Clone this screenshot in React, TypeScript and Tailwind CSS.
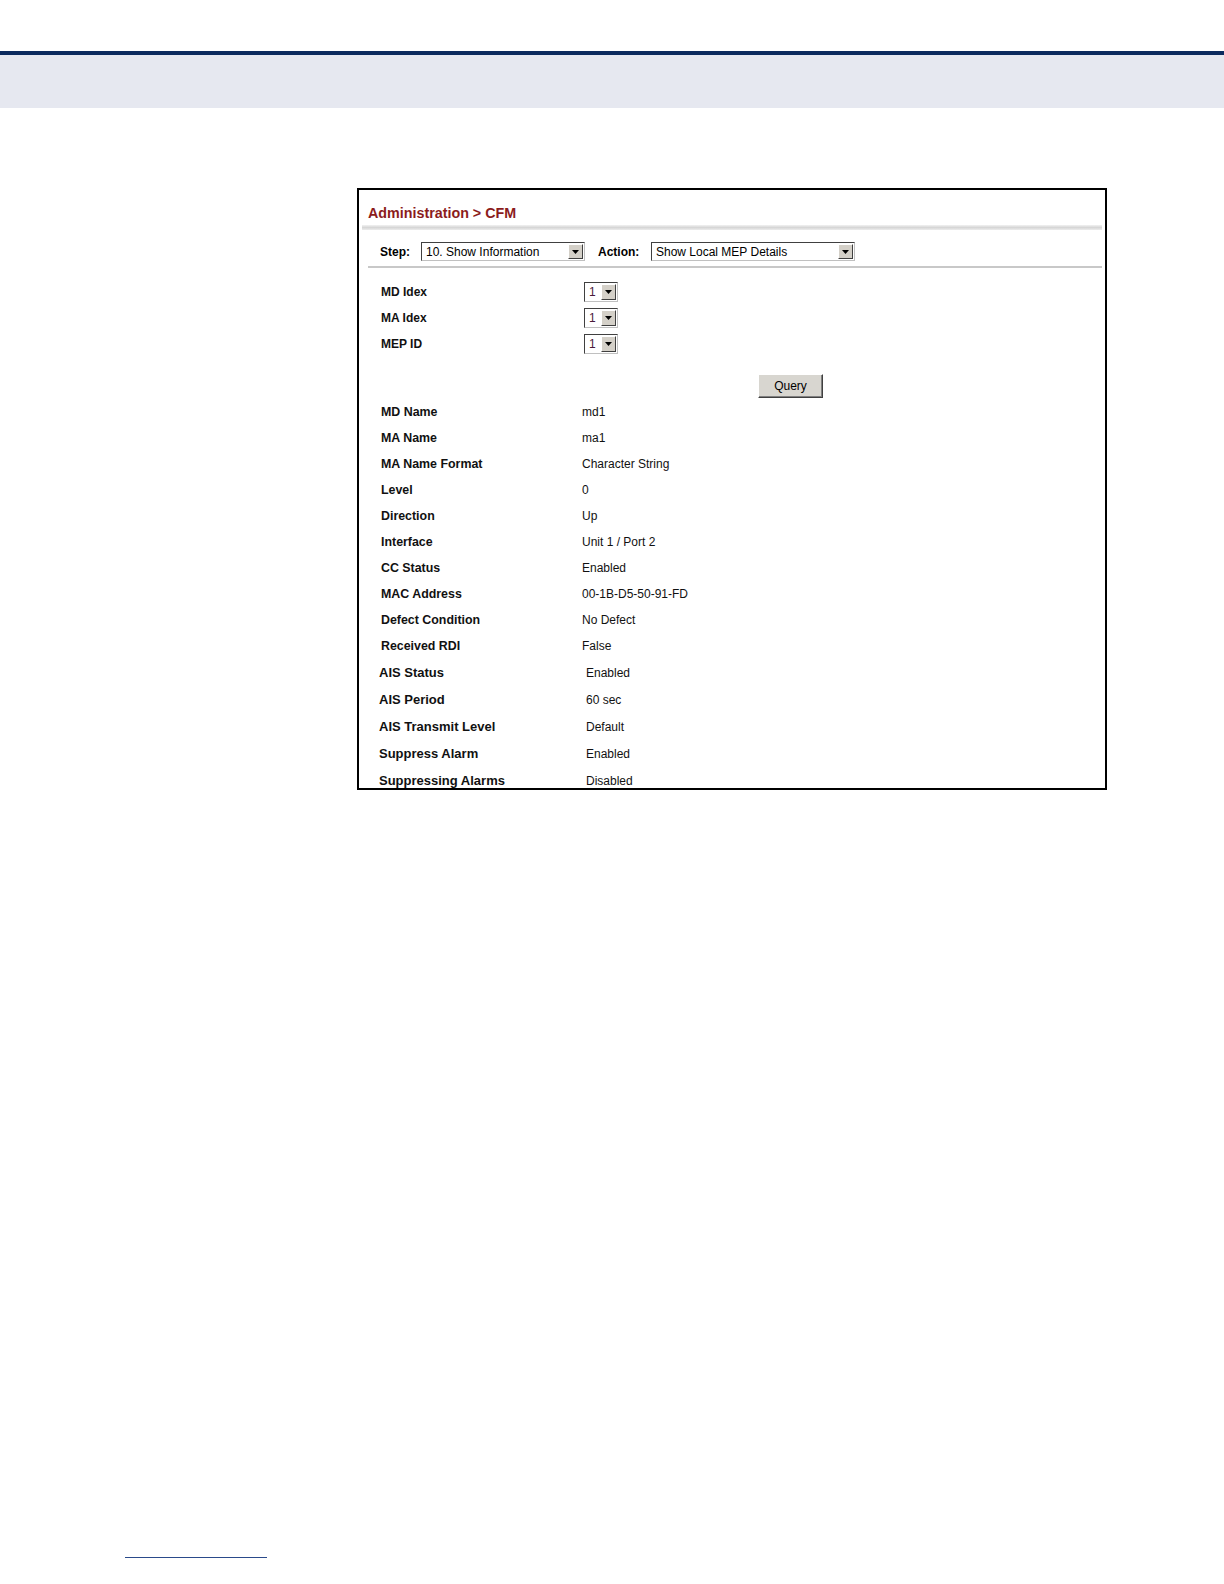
import React from "react";

const Arrow = () => (
  <div className="flex h-full w-[15px] items-center justify-center border border-t-white border-l-white border-b-[#404040] border-r-[#404040] bg-[#d4d0c8]">
    <svg width="7" height="4" viewBox="0 0 7 4">
      <path d="M0 0 H7 L3.5 4 Z" fill="#000" />
    </svg>
  </div>
);

const Select = ({ value, width }: { value: string; width: string }) => (
  <div
    className={`flex h-[19px] items-stretch border border-t-[#404040] border-l-[#404040] border-b-[#c0c0c0] border-r-[#c0c0c0] bg-white p-[1px] ${width}`}
  >
    <div className="flex flex-1 items-center pl-[3px] text-[12px] leading-none text-black">
      {value}
    </div>
    <Arrow />
  </div>
);

const SmallSelect = () => (
  <div className="flex h-[20px] w-[34px] items-stretch border border-t-[#404040] border-l-[#404040] border-b-[#c0c0c0] border-r-[#c0c0c0] bg-white p-[1px]">
    <div className="flex flex-1 items-center pl-[3px] text-[12px] leading-none text-[#4a1a3a]">
      1
    </div>
    <Arrow />
  </div>
);

const indexRows = ["MD Idex", "MA Idex", "MEP ID"];

const infoRows: [string, string][] = [
  ["MD Name", "md1"],
  ["MA Name", "ma1"],
  ["MA Name Format", "Character String"],
  ["Level", "0"],
  ["Direction", "Up"],
  ["Interface", "Unit 1 / Port 2"],
  ["CC Status", "Enabled"],
  ["MAC Address", "00-1B-D5-50-91-FD"],
  ["Defect Condition", "No Defect"],
  ["Received RDI", "False"],
];

const aisRows: [string, string][] = [
  ["AIS Status", "Enabled"],
  ["AIS Period", "60 sec"],
  ["AIS Transmit Level", "Default"],
  ["Suppress Alarm", "Enabled"],
  ["Suppressing Alarms", "Disabled"],
];

export default function App() {
  return (
    <div className="relative min-h-[1584px] w-[1224px] bg-white font-['Liberation_Sans',Arial,sans-serif]">
      {/* page header band */}
      <div className="h-[51px]" />
      <div className="h-[4px] bg-[#0b2a5e]" />
      <div className="h-[53px] bg-[#e6e8f0]" />

      <div className="pl-[357px] pt-[80px]">
        <div className="h-[602px] w-[750px] overflow-hidden border-2 border-black bg-white">
          {/* title */}
          <div className="mt-[15px] pl-[9px] text-[14.3px] font-bold leading-[16px] text-[#8b1c1c]">
            Administration &gt; CFM
          </div>
          <div className="mx-[3px] mt-[4px] h-[5px] bg-gradient-to-b from-[#f2f2f2] via-[#d6d6d6] to-[#ececec]" />

          {/* step / action */}
          <div className="mt-[12px] flex h-[19px] items-center pl-[21px] text-[12px] text-black">
            <span className="w-[41px] font-bold">Step:</span>
            <Select value="10. Show Information" width="w-[164px]" />
            <span className="ml-[13px] w-[53px] font-bold">Action:</span>
            <Select value="Show Local MEP Details" width="w-[204px]" />
          </div>
          <div className="ml-[9px] mr-[3px] mt-[5px] h-[2px] bg-[#c8c8c8]" />

          {/* index selects */}
          <div className="mt-[11px] pl-[22px]">
            {indexRows.map((label) => (
              <div key={label} className="flex h-[26px] items-center">
                <span className="w-[203px] text-[12px] font-bold text-[#111]">
                  {label}
                </span>
                <SmallSelect />
              </div>
            ))}
          </div>

          <div className="ml-[399px] mt-[17px] flex h-[24px] w-[65px] items-center justify-center border border-t-white border-l-white border-b-[#404040] border-r-[#404040] bg-[#d8d6d0] text-[12px] text-black shadow-[inset_-1px_-1px_0_#808080]">
            Query
          </div>

          {/* info rows */}
          <div className="mt-[1px] pl-[22px] text-[12px] text-[#111]">
            {infoRows.map(([label, value]) => (
              <div key={label} className="flex h-[26px] items-center">
                <span className="w-[201px] text-[12.4px] font-bold">{label}</span>
                <span>{value}</span>
              </div>
            ))}
            {aisRows.map(([label, value]) => (
              <div key={label} className="-ml-[2px] flex h-[27px] items-center">
                <span className="w-[207px] text-[13px] font-bold">{label}</span>
                <span>{value}</span>
              </div>
            ))}
          </div>
        </div>
      </div>

      {/* footer rule */}
      <div className="ml-[125px] mt-[767px] h-[1px] w-[142px] bg-[#2a4a8a]" />
    </div>
  );
}
